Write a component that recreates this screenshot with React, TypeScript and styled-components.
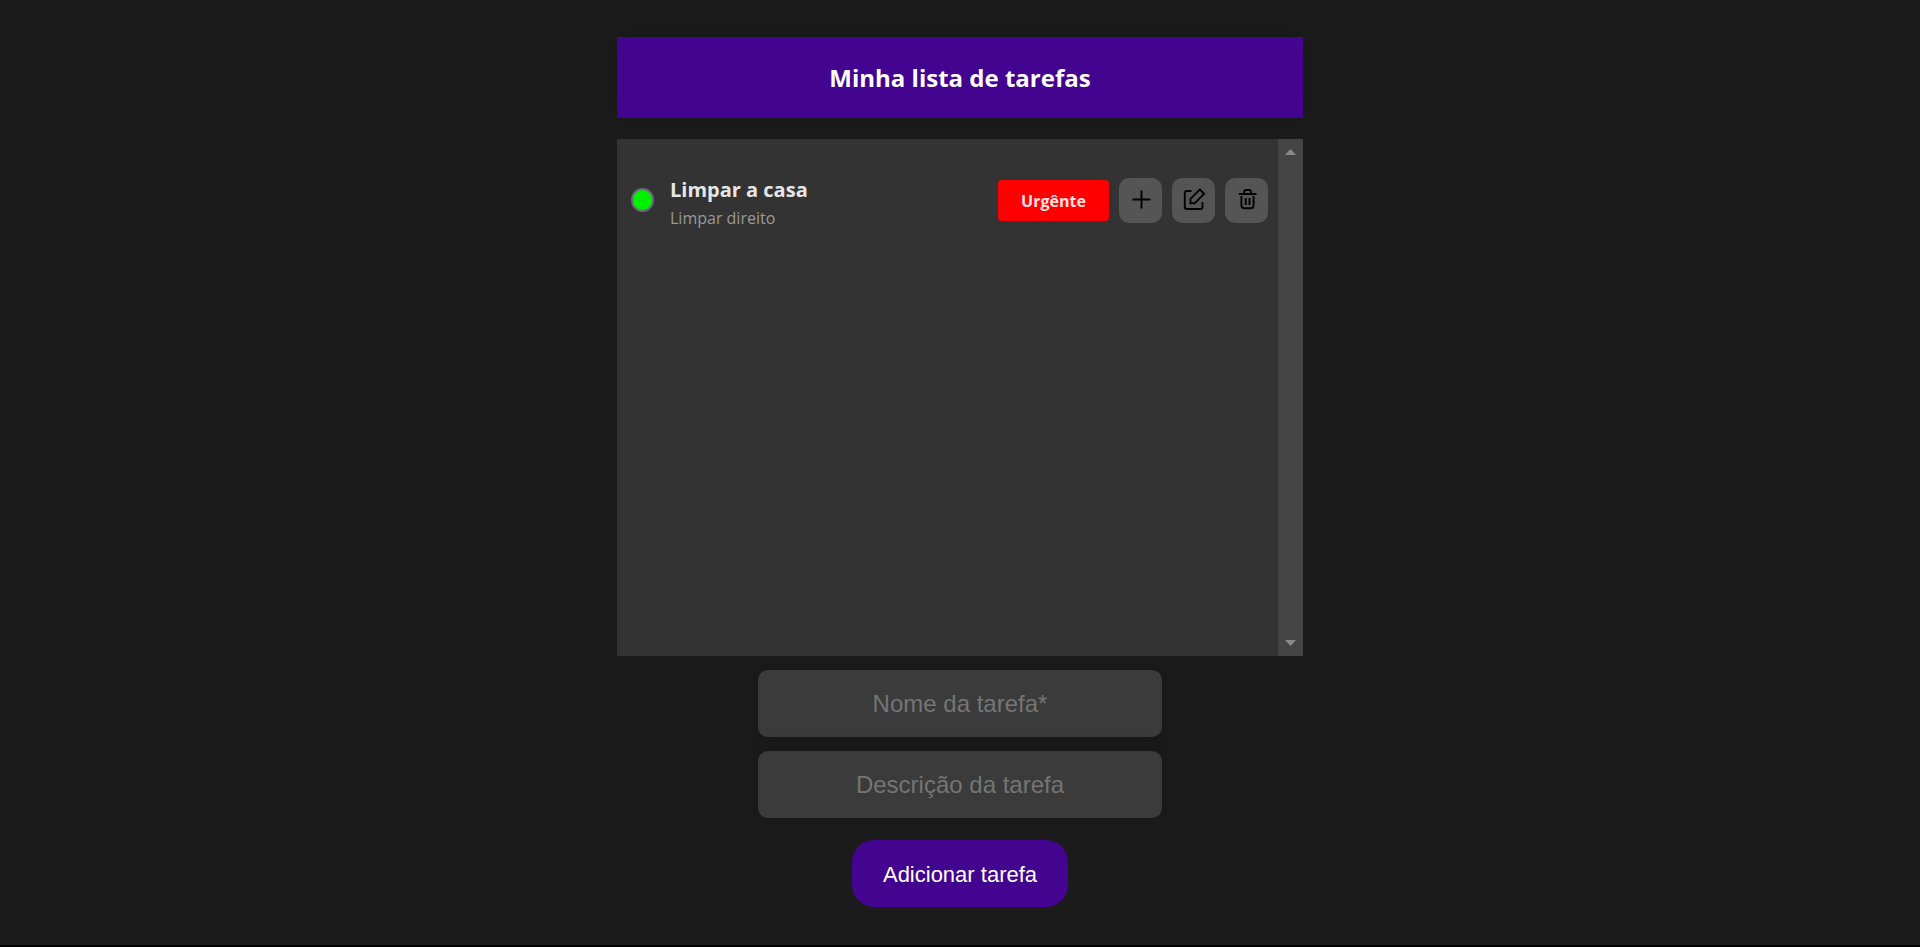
import React from "react";
import styled, { createGlobalStyle } from "styled-components";

const colors = {
  page: "#1b1b1b",
  purple: "#43048f",
  panel: "#333333",
  track: "#444444",
  field: "#3b3b3b",
  iconButton: "#555555",
};

const GlobalStyle = createGlobalStyle`
  *, *::before, *::after { box-sizing: border-box; }
  html, body { margin: 0; padding: 0; background: #000; }
  body { font-family: "Segoe UI", "Open Sans", "Noto Sans", sans-serif; }
  h1, h2, p, ul { margin: 0; padding: 0; }
`;

const Page = styled.main`
  display: flex;
  flex-direction: column;
  align-items: center;
  min-height: calc(100vh - 2px);
  padding: 37px 16px;
  background: ${colors.page};
`;

const Header = styled.header`
  width: 100%;
  max-width: 686px;
  margin-bottom: 21px;
  padding: 24px;
  background: ${colors.purple};
  box-shadow: 0 0 20px rgba(0, 0, 0, 0.16);
`;

const Title = styled.h1`
  color: #fff;
  font-size: 24px;
  font-weight: 700;
  line-height: 33px;
  text-align: center;
`;

const Panel = styled.section`
  display: flex;
  width: 100%;
  max-width: 686px;
  min-height: 517px;
  background: ${colors.panel};
`;

const TaskList = styled.ul`
  flex: 1;
  min-width: 0;
  padding: 31px 10px 31px 14px;
  list-style: none;
`;

const ScrollTrack = styled.div`
  display: flex;
  flex-direction: column;
  justify-content: space-between;
  align-items: center;
  width: 25px;
  padding: 10px 0;
  background: ${colors.track};
`;

const Arrow = styled.svg`
  display: block;
  width: 11px;
  height: 6px;
  fill: #8a8a8a;
`;

const Task = styled.li`
  display: flex;
  align-items: center;
  gap: 10px;
`;

const Status = styled.button`
  flex: none;
  width: 23px;
  height: 24px;
  margin-right: 6px;
  padding: 0;
  border: 2px solid #6b6b80;
  border-radius: 50%;
  background: #00f000;
`;

const TaskText = styled.div`
  flex: 1;
  min-width: 0;
  padding-top: 4px;
`;

const TaskName = styled.h2`
  color: #e6e6e6;
  font-size: 20px;
  font-weight: 700;
  line-height: 32px;
`;

const TaskDescription = styled.p`
  color: #999;
  font-size: 16px;
  line-height: 24px;
`;

const Priority = styled.span`
  width: 111px;
  padding-top: 2px;
  border-radius: 4px;
  background: #f00;
  color: #ffe2e2;
  font-size: 16px;
  font-weight: 700;
  line-height: 39px;
  text-align: center;
`;

const IconButton = styled.button`
  display: flex;
  align-items: center;
  justify-content: center;
  width: 43px;
  height: 45px;
  padding: 0;
  border: 0;
  border-radius: 10px;
  background: ${colors.iconButton};
  color: #000;
`;

const Icon = styled.svg`
  display: block;
  width: 24px;
  height: 24px;
  fill: none;
  stroke: currentColor;
  stroke-width: 1.9;
`;

const Form = styled.form`
  display: flex;
  flex-direction: column;
  align-items: center;
  width: 100%;
  max-width: 404px;
  margin-top: 14px;
  gap: 14px;
`;

const Field = styled.input`
  width: 100%;
  height: 67px;
  padding: 0 16px;
  border: 0;
  border-radius: 10px;
  background: ${colors.field};
  box-shadow: 0 0 20px rgba(0, 0, 0, 0.16);
  color: #fff;
  font-family: Arial, "Liberation Sans", sans-serif;
  font-size: 24px;
  text-align: center;

  &::placeholder {
    color: #757575;
    opacity: 1;
  }
`;

const Submit = styled.button`
  width: 216px;
  height: 67px;
  margin-top: 8px;
  padding: 3px 0 0;
  border: 0;
  border-radius: 22px;
  background: ${colors.purple};
  color: #fff;
  font-family: Arial, "Liberation Sans", sans-serif;
  font-size: 22px;
`;

export default function App() {
  return (
    <>
      <GlobalStyle />
      <Page>
        <Header>
          <Title>Minha lista de tarefas</Title>
        </Header>

        <Panel>
          <TaskList>
            <Task>
              <Status type="button" aria-label="Concluir tarefa" />
              <TaskText>
                <TaskName>Limpar a casa</TaskName>
                <TaskDescription>Limpar direito</TaskDescription>
              </TaskText>
              <Priority>Urgênte</Priority>
              <IconButton type="button" aria-label="Mudar prioridade">
                <Icon viewBox="0 0 24 24">
                  <path d="M12.500 2.500v18M3.500 11.500h18" />
                </Icon>
              </IconButton>
              <IconButton type="button" aria-label="Editar">
                <Icon viewBox="0 0 24 24">
                  <path d="M9.500 3H4.800Q2.800 3 2.800 5v14Q2.800 21 4.800 21H18.500Q20.500 21 20.500 19V14" />
                  <path d="M17.800 1.500L22.100 5.800 12.800 15.200H8.500V10.900Z" />
                </Icon>
              </IconButton>
              <IconButton type="button" aria-label="Excluir">
                <Icon viewBox="0 0 24 24">
                  <path d="M3.800 6h17.700" />
                  <path d="M9.200 5.500V4Q9.200 2 11.200 2h2.800Q16 2 16 4V5.500" />
                  <path d="M6.400 8V17.200Q6.400 20.200 9.400 20.200h6.200Q18.600 20.200 18.600 17.200V8" />
                  <path d="M10.700 10v7M14.500 10v7" />
                </Icon>
              </IconButton>
            </Task>
          </TaskList>
          <ScrollTrack aria-hidden="true">
            <Arrow viewBox="0 0 11 6">
              <path d="M5.500 0L11 6H0Z" />
            </Arrow>
            <Arrow viewBox="0 0 11 6">
              <path d="M0 0H11L5.500 6Z" />
            </Arrow>
          </ScrollTrack>
        </Panel>

        <Form onSubmit={(event) => event.preventDefault()}>
          <Field type="text" aria-label="Nome da tarefa" placeholder="Nome da tarefa*" />
          <Field type="text" aria-label="Descrição da tarefa" placeholder="Descrição da tarefa" />
          <Submit type="submit">Adicionar tarefa</Submit>
        </Form>
      </Page>
    </>
  );
}
